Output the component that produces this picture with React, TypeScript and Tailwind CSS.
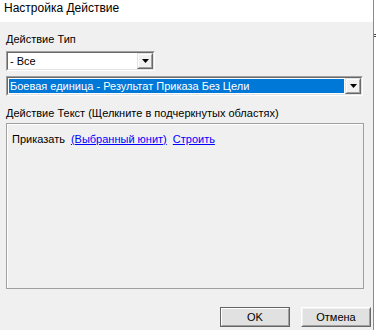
import React from "react";

const font = { fontFamily: '"Liberation Sans", Arial, sans-serif' };

function Arrow() {
  return (
    <svg width="7" height="4" viewBox="0 0 7 4" aria-hidden="true">
      <path d="M0 0h7L3.5 4z" fill="#000" />
    </svg>
  );
}

// classic raised drop-down button inside a sunken combo
function DropButton() {
  return (
    <div className="flex h-full w-[16px] shrink-0 border border-t-[#e3e3e3] border-l-[#e3e3e3] border-b-[#696969] border-r-[#696969]">
      <div className="flex flex-1 items-center justify-center border border-t-white border-l-white border-b-[#a0a0a0] border-r-[#a0a0a0] bg-[#f0f0f0]">
        <Arrow />
      </div>
    </div>
  );
}

function Combo({ value, width, selected }: { value: string; width: string; selected?: boolean }) {
  return (
    <div className={`${width} h-[20px] border border-t-[#a0a0a0] border-l-[#a0a0a0] border-b-white border-r-white`}>
      <div className="flex h-full border border-t-[#696969] border-l-[#696969] border-b-[#e3e3e3] border-r-[#e3e3e3] bg-white">
        <div className="flex min-w-0 flex-1 p-px">
          <div
            className={`flex flex-1 items-center truncate pl-px text-[11px] leading-[14px] ${
              selected ? "bg-[#0078d7] text-white" : "text-black"
            }`}
          >
            {value}
          </div>
        </div>
        <DropButton />
      </div>
    </div>
  );
}

export default function App() {
  return (
    <div className="flex h-[330px] w-[376px] bg-white text-black" style={font}>
      <div className="flex w-[373px] flex-col">
        <div className="h-[22px] bg-white pl-[4px] pt-[1px] text-[12px] leading-[15px]">Настройка Действие</div>

        <div className="flex flex-1 flex-col bg-[#f0f0f0] px-[6px]">
          <div className="mt-[10px] text-[11px] leading-[14px]">Действие Тип</div>
          <div className="mt-[5px]">
            <Combo value="- Все" width="w-[149px]" />
          </div>
          <div className="mt-[5px]">
            <Combo value="Боевая единица - Результат Приказа Без Цели" width="w-[357px]" selected />
          </div>

          <div className="mt-[10px] text-[11px] leading-[14px]">Действие Текст (Щелкните в подчеркнутых областях)</div>
          <div className="mt-[3px] h-[166px] w-[358px] border border-[#a0a0a0]">
            <div className="h-full border border-t-white border-l-white border-b-transparent border-r-transparent px-[4px] pt-[7px] text-[11px] leading-[14px]">
              <span>Приказать</span>
              <span className="ml-[6px] text-[#0000ff] underline">(Выбранный юнит)</span>
              <span className="ml-[6px] text-[#0000ff] underline">Строить</span>
            </div>
          </div>

          <div className="mr-[-4px] mt-[18px] flex justify-end gap-[11px]">
            <button className="h-[20px] w-[70px] border border-[#646464] text-[11px] leading-[14px]">
              <div className="flex h-full items-center justify-center border border-t-white border-l-white border-b-[#a0a0a0] border-r-[#a0a0a0] bg-[#e1e1e1]">
                OK
              </div>
            </button>
            <button className="h-[20px] w-[70px] border border-t-white border-l-white border-b-[#696969] border-r-[#696969] text-[11px] leading-[14px]">
              <div className="flex h-full items-center justify-center border border-t-[#f0f0f0] border-l-[#f0f0f0] border-b-[#a0a0a0] border-r-[#a0a0a0] bg-[#e1e1e1]">
                Отмена
              </div>
            </button>
          </div>
        </div>
      </div>

      <div className="w-px bg-[#8a8a8a]" />
      <div className="flex w-[2px] flex-col">
        <div className="mt-[34px] h-px w-[2px] bg-[#404040]" />
        <div className="mt-px h-px w-[2px] bg-[#404040]" />
      </div>
    </div>
  );
}
